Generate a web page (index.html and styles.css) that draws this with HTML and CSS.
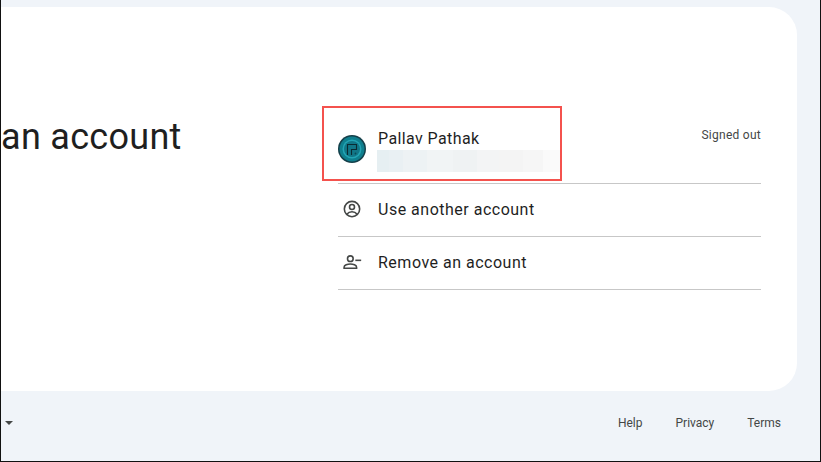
FILE: index.html
```html
<!DOCTYPE html>
<html lang="en">
<head>
<meta charset="utf-8">
<title>Choose an account</title>
<link rel="stylesheet" href="styles.css">
</head>
<body>
<div class="frame">
  <main class="card">
    <div class="lead"><h1 class="title">an account</h1></div>
    <ul class="accounts">
      <li class="row row-account">
        <svg class="avatar" viewBox="0 0 28 28" width="28" height="28" aria-hidden="true">
          <circle cx="14" cy="14" r="14" fill="#143f49"/>
          <circle cx="14" cy="14" r="12.500" fill="#0f7f8e"/>
          <circle cx="14" cy="14" r="9.500" fill="#23a5b5"/>
          <circle cx="14" cy="14" r="8" fill="#117687"/>
          <path d="M9.500 20V9.500h9v5H13.500V20" fill="none" stroke="#0a2b33" stroke-width="1.100"/>
          <circle cx="17.500" cy="18.500" r=".9" fill="#0a4a56"/>
        </svg>
        <div class="who">
          <div class="name">Pallav Pathak</div>
          <div class="email"></div>
        </div>
        <span class="status">Signed out</span>
        <div class="highlight"></div>
      </li>
      <li class="row">
        <svg class="icon" viewBox="0 0 24 24" width="20" height="20" aria-hidden="true">
          <circle cx="12" cy="12" r="9.200" fill="none" stroke="#444746" stroke-width="1.900"/>
          <circle cx="12" cy="9.600" r="3" fill="none" stroke="#444746" stroke-width="1.900"/>
          <path d="M5.800 18.200c1.600-2 3.800-3 6.200-3s4.600 1 6.200 3" fill="none" stroke="#444746" stroke-width="1.900"/>
        </svg>
        <span class="label">Use another account</span>
      </li>
      <li class="row">
        <svg class="icon" viewBox="0 0 24 24" width="20" height="20" aria-hidden="true">
          <circle cx="10" cy="8" r="3.400" fill="none" stroke="#444746" stroke-width="1.900"/>
          <path d="M2.500 19.500v-1.300c0-2.300 4.200-3.900 7.500-3.900s7.500 1.600 7.500 3.900v1.300z" fill="none" stroke="#444746" stroke-width="1.900"/>
          <path d="M16 10h7" fill="none" stroke="#444746" stroke-width="1.900"/>
        </svg>
        <span class="label">Remove an account</span>
      </li>
    </ul>
  </main>
  <footer class="foot">
    <span class="caret"></span>
    <nav class="links">
      <a class="link">Help</a>
      <a class="link">Privacy</a>
      <a class="link">Terms</a>
    </nav>
  </footer>
</div>
</body>
</html>
```
FILE: styles.css
```css
* { box-sizing: border-box; }
html, body { margin: 0; padding: 0; }
body {
  width: 821px;
  height: 462px;
  overflow: hidden;
  font-family: Roboto, "Noto Sans", sans-serif;
  color: #1f1f1f;
}
.frame {
  width: 821px;
  height: 462px;
  display: flex;
  flex-direction: column;
  background: #f0f4f9;
  border-left: 1px solid #111;
  border-right: 1px solid #111;
  border-bottom: 1px solid #111;
  padding-top: 7px;
}
.card {
  width: 796px;
  height: 384px;
  flex: none;
  background: #fff;
  border-radius: 0 28px 28px 0;
  display: flex;
  padding: 0 36px 0 0;
}
.lead { width: 337px; flex: none; padding-top: 106px; }
.title {
  margin: 0;
  font-size: 36px;
  font-weight: 400;
  line-height: 48px;
  letter-spacing: .3px;
  white-space: nowrap;
}
.accounts {
  list-style: none;
  margin: 0;
  padding: 100px 0 0;
  flex: 1;
}
.row {
  position: relative;
  display: flex;
  align-items: center;
  height: 53px;
  padding-bottom: 2px;
  border-bottom: 1px solid #c7c7c7;
}
.row-account { height: 77px; padding: 7px 0 0; }
.avatar { flex: none; margin-right: 12px; }
.who { flex: 1; padding-top: 3px; }
.name { font-size: 16px; line-height: 20px; letter-spacing: .4px; color: #1f1f1f; }
.email {
  width: 183px;
  height: 22px;
  margin-top: 1px;
  margin-left: -1px;
  background: linear-gradient(90deg,
    #e6eff2 0 12px, #e9f0f3 12px 26px, #edf2f4 26px 50px, #f1f4f5 50px 76px,
    #eff2f3 76px 100px, #f3f4f5 100px 122px, #f4f4f4 122px 146px, #f6f6f6 146px 166px, #fafafa 166px 183px);
}
.status { align-self: flex-start; margin-top: 13px; font-size: 12px; line-height: 16px; letter-spacing: .26px; color: #444746; }
.highlight {
  position: absolute;
  left: -16px;
  top: -1px;
  width: 240px;
  height: 75px;
  border: 2px solid #f4524d;
}
.icon { flex: none; margin: 0 16px 0 4px; }
.label { font-size: 16px; letter-spacing: .5px; color: #1f1f1f; }
.foot {
  flex: 1;
  display: flex;
  align-items: flex-start;
  justify-content: space-between;
  padding: 24px 39px 0 4px;
}
.caret {
  width: 0;
  height: 0;
  margin-top: 6px;
  border-left: 4px solid transparent;
  border-right: 4px solid transparent;
  border-top: 4px solid #444746;
}
.links { display: flex; gap: 33px; }
.link { font-size: 12px; line-height: 16px; color: #444746; }
```
